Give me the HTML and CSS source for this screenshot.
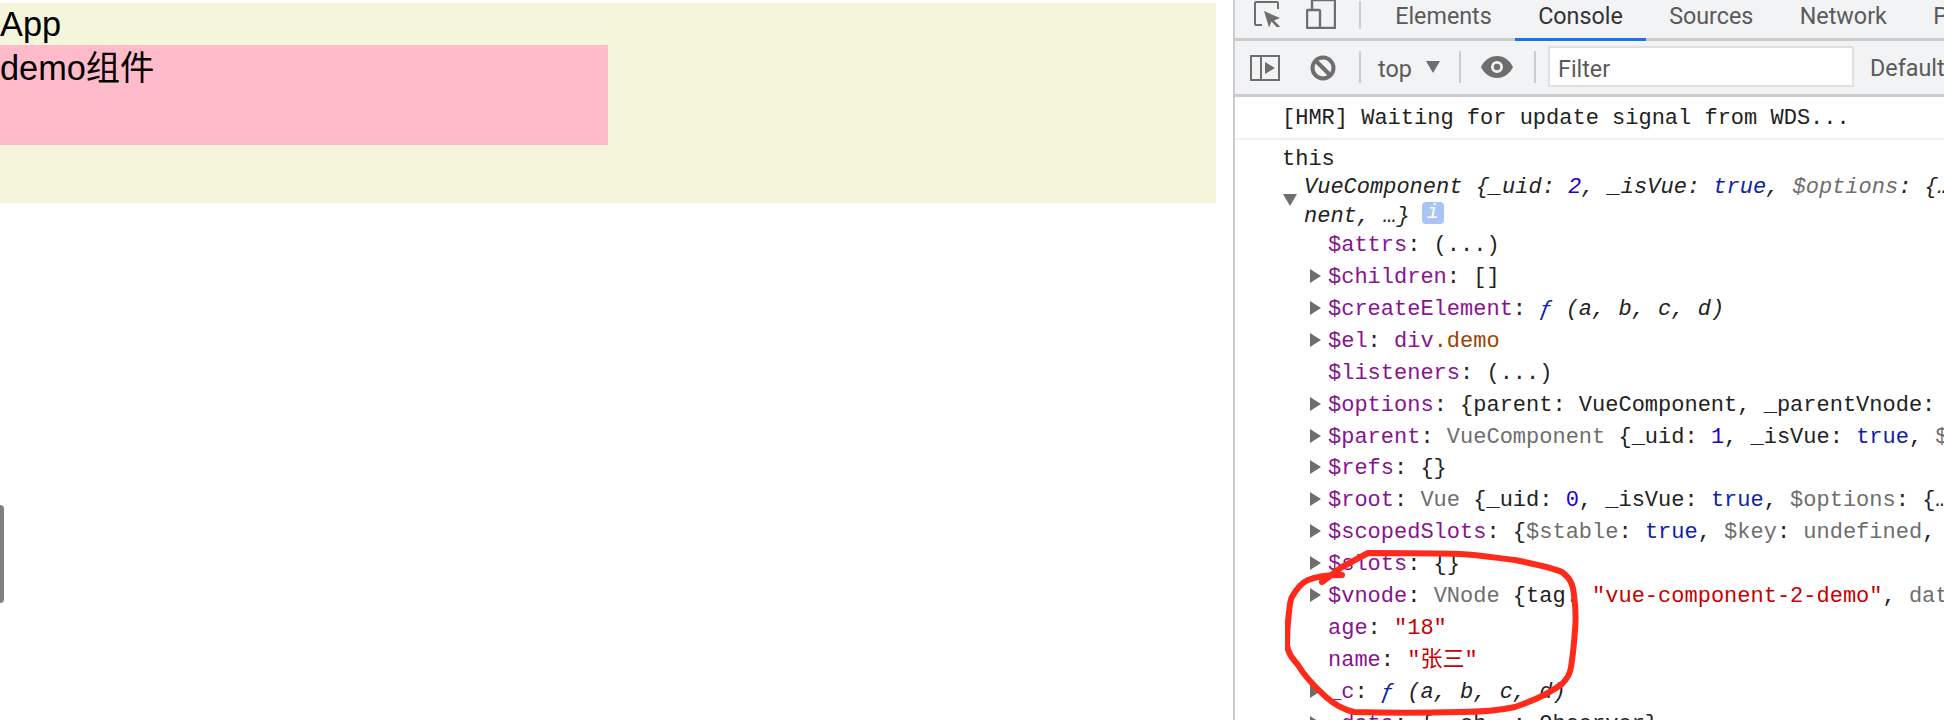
FILE: index.html
```html
<!DOCTYPE html>
<html lang="zh">
<head>
<meta charset="utf-8">
<title>App</title>
<link rel="stylesheet" href="styles.css">
</head>
<body>
<main class="page">
  <div class="app">App
    <div class="demo">demo组件</div>
  </div>
  <div class="handle"></div>
</main>
<section class="devtools">
  <header class="tabbar">
    <svg class="ic-inspect" viewBox="0 0 26 27" width="26" height="27"><path d="M8 25H2a1 1 0 0 1-1-1V3a1 1 0 0 1 1-1h21a1 1 0 0 1 1 1v6" fill="none" stroke="#6e6e6e" stroke-width="2"/><path d="M10 11l16 7-6 2.500 6 6-2.500 1.500-6-6.500-2.500 6z" fill="#6e6e6e"/></svg>
    <svg class="ic-device" viewBox="0 0 30 29" width="30" height="29"><path d="M6 9V1a1 1 0 0 1 1-1h22v28H2a1 1 0 0 1-1-1V11a1 1 0 0 1 1-1h11a1 1 0 0 1 1 1v17" fill="none" stroke="#6e6e6e" stroke-width="2.400"/></svg>
    <span class="sep sep-top"></span>
    <nav class="tabs">
      <span class="tab">Elements</span>
      <span class="tab active">Console</span>
      <span class="tab">Sources</span>
      <span class="tab">Network</span>
      <span class="tab">Performance</span>
    </nav>
  </header>
  <div class="toolbar">
    <svg class="ic-sidebar" viewBox="0 0 30 26" width="30" height="26"><path d="M1 1h28v24H1zM11 1v24" fill="none" stroke="#6e6e6e" stroke-width="2"/><path d="M15 7l10 6-10 6z" fill="#6e6e6e"/></svg>
    <svg class="ic-block" viewBox="0 0 26 26" width="26" height="26"><circle cx="13" cy="13" r="10.500" fill="none" stroke="#6e6e6e" stroke-width="4"/><path d="M5.500 5.500l15 15" stroke="#6e6e6e" stroke-width="4"/></svg>
    <span class="sep sep-block"></span>
    <span class="context">top</span>
    <svg class="ic-arrow" viewBox="0 0 14 12" width="14" height="12"><path d="M0 0h14L7 12z" fill="#6e6e6e"/></svg>
    <span class="sep sep-ctx"></span>
    <svg class="ic-eye" viewBox="0 0 32 22" width="32" height="22"><path fill-rule="evenodd" d="M16 0c7 0 13 4.500 16 11-3 6.500-9 11-16 11S3 17.500 0 11C3 4.500 9 0 16 0zm0 5a6 6 0 1 0 0 12 6 6 0 0 0 0-12z" fill="#6e6e6e"/><circle cx="16" cy="11" r="3.200" fill="#6e6e6e"/></svg>
    <span class="sep sep-eye"></span>
    <div class="filter">Filter</div>
    <span class="levels">Default levels</span>
  </div>
  <div class="console">
    <div class="msg-hmr">[HMR] Waiting for update signal from WDS...</div>
    <div class="line">this</div>
    <div class="obj">
      <svg class="tri-down" viewBox="0 0 14 12" width="14" height="12"><path d="M0 0h14L7 12z" fill="#6e6e6e"/></svg>
      <div class="line it">VueComponent {_uid: <b class="num">2</b>, _isVue: <b class="bool">true</b>, <i class="dim">$options</i>: {…</div>
      <div class="line it">nent, …} <span class="info">i</span></div>
    </div>
    <div class="tree">
      <div class="row"><span class="k">$attrs</span>: (...)</div>
      <div class="row ex"><span class="k">$children</span>: []</div>
      <div class="row ex"><span class="k">$createElement</span>: <span class="it"><span class="fn">ƒ</span> (a, b, c, d)</span></div>
      <div class="row ex"><span class="k">$el</span>: <span class="k">div</span><span class="cls">.demo</span></div>
      <div class="row"><span class="k">$listeners</span>: (...)</div>
      <div class="row ex"><span class="k">$options</span>: {parent: VueComponent, _parentVnode: VNode, propsData: {…}}</div>
      <div class="row ex"><span class="k">$parent</span>: <span class="dim">VueComponent</span> {_uid: <span class="num">1</span>, _isVue: <span class="bool">true</span>, <span class="dim">$options: {…}}</span></div>
      <div class="row ex"><span class="k">$refs</span>: {}</div>
      <div class="row ex"><span class="k">$root</span>: <span class="dim">Vue</span> {_uid: <span class="num">0</span>, _isVue: <span class="bool">true</span>, <span class="dim">$options</span>: {…</div>
      <div class="row ex"><span class="k">$scopedSlots</span>: {<span class="dim">$stable</span>: <span class="bool">true</span>, <span class="dim">$key</span>: <span class="dim">undefined</span>, $hasNormal: false}</div>
      <div class="row ex"><span class="k">$slots</span>: {}</div>
      <div class="row ex"><span class="k">$vnode</span>: <span class="dim">VNode</span> {tag: <span class="str">"vue-component-2-demo"</span>, <span class="dim">data: {…}}</span></div>
      <div class="row"><span class="k">age</span>: <span class="str">"18"</span></div>
      <div class="row"><span class="k">name</span>: <span class="str">"张三"</span></div>
      <div class="row ex"><span class="k">_c</span>: <span class="it"><span class="fn">ƒ</span> (a, b, c, d)</span></div>
      <div class="row ex"><span class="k">_data</span>: {__ob__: Observer}</div>
    </div>
  </div>
  <svg class="scribble" viewBox="0 0 300 170" width="300" height="170"><path d="M37 32L57 17L83 3C110 3 150 3 175 4C195 5 212 8 230 10C250 14 265 17 277 22C285 28 288 34 289 45C291 60 291 70 290 80C289 95 288 105 286 117C285 125 281 130 277 134C262 145 245 152 230 157C212 161 195 162 175 162C140 163 100 163 69 162C60 160 50 155 41 147C30 137 20 127 13 115C7 108 3 103 2 95C2 80 3 70 4 62C5 55 5 50 7 47C12 38 16 33 23 30C32 26 45 25 57 25" fill="none" stroke="#ff2a1a" stroke-width="6" stroke-linecap="round" stroke-linejoin="round"/></svg>
</section>
</body>
</html>
```
FILE: styles.css
```css
* { box-sizing: border-box; }
html, body { margin: 0; height: 720px; overflow: hidden; background: #fff; }
body { display: flex; }

.page { width: 1233px; flex: none; padding-top: 3px; position: relative; font-family: "Liberation Sans", "Noto Sans CJK SC", sans-serif; font-size: 34.300px; color: #000; }
.app { width: 1216px; height: 200px; padding-top: 1px; line-height: 41px; background: #f5f5dc; }
.demo { width: 608px; height: 100px; padding-top: 2px; line-height: 42px; background: #ffbbc9; }
.handle { position: absolute; left: 0; top: 505px; width: 4px; height: 98px; background: #808080; border-radius: 0 4px 4px 0; }

.devtools { position: relative; flex: 1; min-width: 0; height: 720px; overflow: hidden; border-left: 2px solid #ccc; font-family: Roboto, "Liberation Sans", sans-serif; color: #5a5a5a; }

.tabbar { height: 41px; display: flex; align-items: flex-start; background: #f2f3f5; border-bottom: 3px solid #ccc; padding-left: 19px; }
.ic-inspect { flex: none; }
.ic-device { flex: none; margin-left: 26px; }
.sep { flex: none; width: 2px; background: #ccc; margin-top: 2px; }
.sep-top { height: 28px; margin: 1px 11px 0 23px; }
.tabs { display: flex; flex: none; white-space: nowrap; }
.tab { height: 41px; padding: 0 23.200px; font-size: 23.300px; line-height: 32px; }
.tab.active { color: #333; border-bottom: 3px solid #1a73e8; }

.toolbar { height: 56px; display: flex; align-items: center; background: #f2f3f5; border-bottom: 3px solid #ccc; padding: 0 0 3px 15px; white-space: nowrap; overflow: hidden; }
.ic-sidebar { flex: none; margin-top: 4px; }
.ic-block { flex: none; margin-left: 30px; margin-top: 4px; }
.sep-block { height: 32px; margin-left: 23px; }
.context { flex: none; margin-left: 17px; margin-top: 5px; width: 48px; font-size: 23.300px; }
.ic-arrow { flex: none; margin-top: 2px; }
.sep-ctx { height: 32px; margin-left: 19px; }
.ic-eye { flex: none; margin-left: 20px; margin-top: 1px; }
.sep-eye { height: 32px; margin-left: 21px; }
.filter { flex: none; width: 306px; height: 41px; margin-left: 12px; padding-left: 8px; background: #fff; border: 2px solid #e0e0e0; font-size: 23.300px; line-height: 42px; }
.levels { flex: none; margin-left: 16px; margin-top: 4px; font-size: 23.300px; }

.console { font-family: "Liberation Mono", "Noto Sans CJK SC", monospace; font-size: 22px; color: #222; white-space: nowrap; }
.msg-hmr { height: 43px; padding: 6px 0 0 47px; line-height: 32px; border-bottom: 2px solid #f0f0f0; }
.line { height: 28px; line-height: 28px; padding-left: 47px; }
.console > .line { margin-top: 6px; }
.obj { position: relative; }
.obj > .line { padding-left: 69px; }
.obj > .line + .line { line-height: 26px; }
.tri-down { position: absolute; left: 48px; top: 20px; }
.it { font-style: italic; }
.line b { font-weight: 400; }
.dim { color: #6e6e6e; }
.num { color: #1c00cf; }
.bool { color: #0d22aa; }
.str { color: #c80000; }
.fn { color: #0d22aa; }
.k { color: #881391; }
.cls { color: #994500; }
.info { display: inline-block; width: 22px; height: 22px; border-radius: 4px; background: #a9c4f5; color: #fff; font-size: 20px; line-height: 22px; text-align: center; vertical-align: 4px; margin-left: -1px; }

.row { height: 31.930px; line-height: 32px; padding-left: 93px; position: relative; }
.row.ex::before { content: ""; position: absolute; left: 75px; top: 7px; border-left: 11px solid #6e6e6e; border-top: 7px solid transparent; border-bottom: 7px solid transparent; }

.scribble { position: absolute; left: 50px; top: 550px; }
```
